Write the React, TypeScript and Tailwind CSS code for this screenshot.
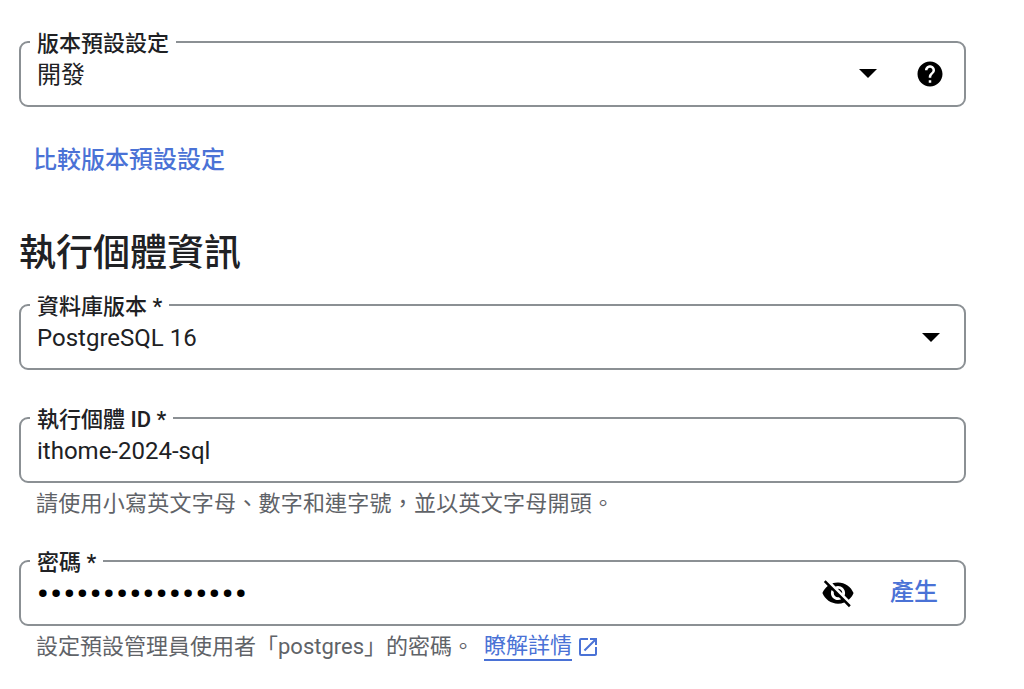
const font = "font-['Roboto','Noto_Sans_CJK_TC',sans-serif]"

function Caret() {
  return (
    <svg width="18" height="9" viewBox="0 0 18 9" className="flex-none">
      <path d="M0 0h18L9 9z" fill="#000" />
    </svg>
  )
}

function Field({ label, children }: { label: string; children: React.ReactNode }) {
  return (
    <div className="relative flex h-[66px] w-[947px] items-start rounded-[9px] border-2 border-[#8b9094] pl-[16px] pr-[24px]">
      <span className="absolute left-[9px] top-[-12px] bg-white px-[7px] text-[22px] font-medium leading-[26px] text-[#202124]">
        {label}
      </span>
      {children}
    </div>
  )
}

export default function App() {
  return (
    <div className={`${font} flex h-[689px] w-[1024px] flex-col items-start overflow-hidden bg-white pl-[19px] pt-[41px]`}>
      <Field label="版本預設設定">
        <span className="mt-[17px] text-[24px] leading-[30px] text-[#202124]">開發</span>
        <div className="ml-auto mt-[26px]"><Caret /></div>
        <svg width="30" height="30" viewBox="0 0 24 24" className="ml-[38px] mr-[-5px] mt-[16px] flex-none">
          <path d="M12 2C6.48 2 2 6.48 2 12s4.48 10 10 10 10-4.48 10-10S17.52 2 12 2zm1 17h-2v-2h2v2zm2.07-7.75l-.9.92C13.45 12.9 13 13.5 13 15h-2v-.5c0-1.1.45-2.1 1.17-2.83l1.24-1.26c.37-.36.59-.86.59-1.41 0-1.1-.9-2-2-2s-2 .9-2 2H8c0-2.21 1.79-4 4-4s4 1.79 4 4c0 .88-.36 1.68-.93 2.25z" />
        </svg>
      </Field>

      <a className="ml-[14px] mt-[38px] text-[24px] font-medium leading-[30px] text-[#4a72d6]">比較版本預設設定</a>

      <h2 className="mt-[54px] text-[37px] font-medium leading-[50px] text-[#202124]">執行個體資訊</h2>

      <div className="mt-[25px]">
        <Field label="資料庫版本 *">
          <span className="mt-[17px] text-[24px] leading-[30px] text-[#202124]">PostgreSQL 16</span>
          <div className="ml-auto mt-[27px]"><Caret /></div>
        </Field>
      </div>

      <div className="mt-[47px]">
        <Field label="執行個體 ID *">
          <span className="mt-[17px] text-[24px] leading-[30px] text-[#202124]">ithome-2024-sql</span>
        </Field>
      </div>

      <p className="ml-[17px] mt-[7px] text-[22px] leading-[28px] tracking-[0.24px] text-[#5f6368]">{"請使用小寫英文字母、數字和連字號\uFF0C並以英文字母開頭。"}</p>

      <div className="mt-[42px]">
        <Field label="密碼 *">
          <span className="mt-[17px] text-[32px] font-bold leading-[30px] tracking-[1.7px] text-[#000]">••••••••••••••••</span>
          <svg width="34" height="34" viewBox="0 0 24 24" className="ml-auto mt-[14px] flex-none">
            <path d="M12 7c2.76 0 5 2.24 5 5 0 .65-.13 1.26-.36 1.83l2.92 2.92c1.51-1.26 2.7-2.89 3.43-4.75-1.73-4.39-6-7.5-11-7.5-1.4 0-2.74.25-3.98.7l2.16 2.16C10.74 7.13 11.35 7 12 7zM2 4.27l2.28 2.28.46.46C3.08 8.3 1.78 10.02 1 12c1.73 4.39 6 7.5 11 7.5 1.55 0 3.03-.3 4.38-.84l.42.42L19.73 22 21 20.73 3.27 3 2 4.27zM7.53 9.8l1.55 1.55c-.05.21-.08.43-.08.65 0 1.66 1.34 3 3 3 .22 0 .44-.03.65-.08l1.55 1.55c-.67.33-1.41.53-2.2.53-2.76 0-5-2.24-5-5 0-.79.2-1.53.53-2.2zm4.31-.78l3.15 3.15.02-.16c0-1.66-1.34-3-3-3l-.17.01z" />
          </svg>
          <span className="ml-[35px] mr-[2px] mt-[15px] text-[24px] font-medium leading-[30px] text-[#4a72d6]">產生</span>
        </Field>
      </div>

      <p className="ml-[17px] mt-[6px] flex items-center text-[22px] leading-[28px] text-[#5f6368]">
        <span>設定預設管理員使用者「postgres」的密碼。</span>
        <a className="ml-[10px] border-b-2 border-[#4a72d6] leading-[27px] text-[#4a72d6]">瞭解詳情</a>
        <svg width="24" height="24" viewBox="0 0 24 24" className="ml-[4px]" fill="#4a72d6">
          <path d="M19 19H5V5h7V3H5a2 2 0 0 0-2 2v14a2 2 0 0 0 2 2h14c1.1 0 2-.9 2-2v-7h-2v7zM14 3v2h3.59l-9.83 9.83 1.41 1.41L19 6.41V10h2V3h-7z" />
        </svg>
      </p>
    </div>
  )
}
